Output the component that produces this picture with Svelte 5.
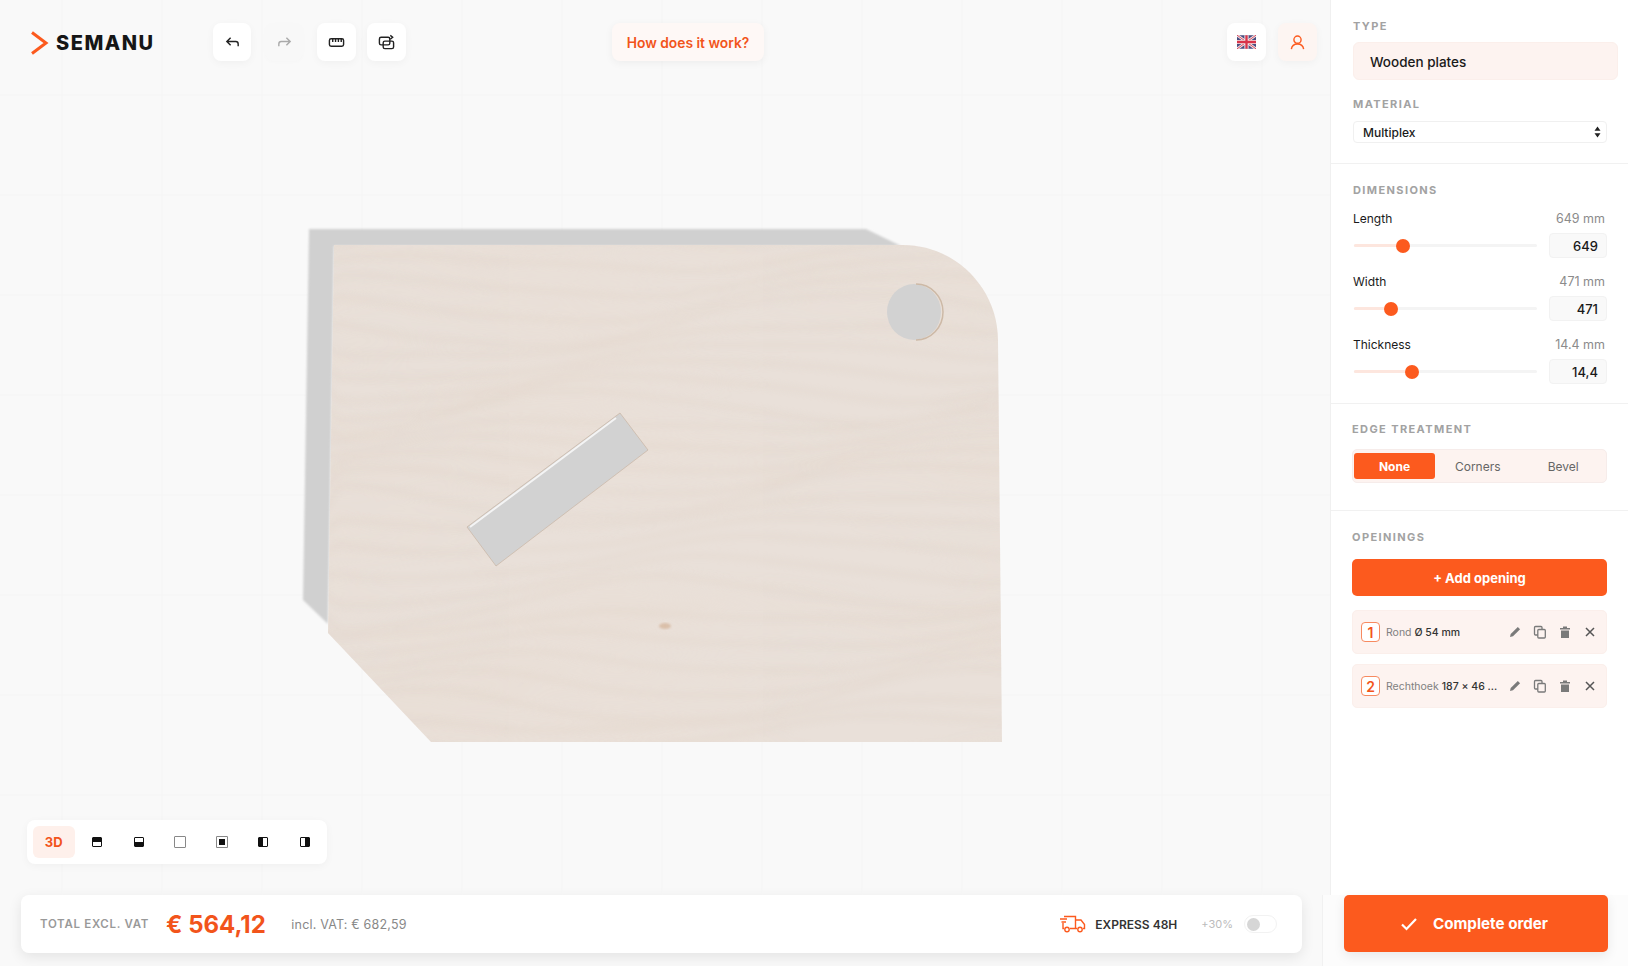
<script lang="ts">
	const dims = [
		{ name: 'Length', read: '649 mm', value: '649', pos: 49 },
		{ name: 'Width', read: '471 mm', value: '471', pos: 37 },
		{ name: 'Thickness', read: '14.4 mm', value: '14,4', pos: 58 }
	];
	const edges = ['None', 'Corners', 'Bevel'];
	const openings = [
		{ nr: 1, kind: 'Rond', size: 'Ø 54 mm' },
		{ nr: 2, kind: 'Rechthoek', size: '187 × 46 ...' }
	];
	const gridX = Array.from({ length: 13 }, (_, i) => 62 + i * 100);
	const gridY = Array.from({ length: 8 }, (_, i) => 95 + i * 100);

	// wavy grain lines for the plywood
	function grainLine(i: number) {
		const y = 250 + i * 19;
		let d = `M320 ${y}`;
		for (let x = 340; x <= 1020; x += 20) {
			const wob = Math.sin(x / 95 + i * 0.55) * (9 + (i % 5) * 3) + Math.sin(x / 37 + i) * 2;
			const lift = -((x - 320) / 680) * 26 + Math.sin(i / 3) * 8;
			d += ` L${x} ${(y + wob + lift).toFixed(1)}`;
		}
		return d;
	}
	const grain = Array.from({ length: 27 }, (_, i) => grainLine(i));
</script>

<div class="app">
	<div class="top">
		<main class="canvas">
			<svg class="scene" viewBox="0 0 1330 895" aria-hidden="true">
				<defs>
					<clipPath id="board">
						<path d="M334 245H903C955 245 998 288 998 340L1002 742H431L328 633Z" />
					</clipPath>
					<filter id="grain" x="0" y="0" width="100%" height="100%">
						<feTurbulence type="fractalNoise" baseFrequency="0.003 0.012" numOctaves="3" seed="11" />
						<feColorMatrix values="0 0 0 0 0.82  0 0 0 0 0.71  0 0 0 0 0.62  0.9 0 0 0 -0.3" />
					</filter>
					<filter id="soft"><feGaussianBlur stdDeviation="1" /></filter>
					<filter id="softer"><feGaussianBlur stdDeviation="3" /></filter>
				</defs>
				{#each gridX as x}
					<line x1={x} y1="0" x2={x} y2="895" class="gridline" />
				{/each}
				{#each gridY as y}
					<line x1="0" y1={y} x2="1330" y2={y} class="gridline" />
				{/each}
				<path d="M309 229H866L901 246H334L328 624L303 600Z" fill="#d0d0d0" filter="url(#soft)" />
				<g clip-path="url(#board)">
					<rect x="320" y="240" width="690" height="510" fill="#e9e0d9" />
					<rect x="320" y="240" width="690" height="510" filter="url(#grain)" opacity="0.5" />
					<g filter="url(#softer)" fill="none" stroke="#dccbbd" stroke-width="5" opacity="0.2">
						{#each grain as d}
							<path {d} />
						{/each}
					</g>
					<ellipse cx="665" cy="626" rx="6" ry="3" fill="#d6b79e" opacity="0.8" filter="url(#soft)" />
				</g>
				<ellipse cx="914" cy="312" rx="27" ry="28" fill="#d2d2d2" />
				<path d="M916 284A27 28 0 0 1 916 340" fill="none" stroke="#cdb9a6" stroke-width="1.500" />
				<path d="M620 413L648 450L496 566L467 527Z" fill="#d2d2d2" stroke="#c8b5a3" stroke-width="0.700" />
				<path d="M470 527L616 418" stroke="#f4f4f4" stroke-width="2" />
			</svg>

			<header class="bar">
				<div class="logo">
					<svg width="19" height="24" viewBox="0 0 19 24"><path d="M2 1.500L16 12L2 22.500" fill="none" stroke="#fc5a1e" stroke-width="3" /></svg>
					<span>SEMANU</span>
				</div>
				<div class="tools">
					<button class="tile" aria-label="Undo">
						<svg viewBox="0 0 18 18"><path d="M7 4L3 8L7 12M3 8H12.500A2.500 2.500 0 0 1 15 10.500V13" /></svg>
					</button>
					<button class="tile off" aria-label="Redo">
						<svg viewBox="0 0 18 18"><path d="M11 4L15 8L11 12M15 8H5.500A2.500 2.500 0 0 0 3 10.500V13" /></svg>
					</button>
					<button class="tile wide" aria-label="Measure">
						<svg viewBox="0 0 18 18"><rect x="1.500" y="5" width="15" height="8" rx="1.800" /><path d="M5 5V8.500M8 5V8.500M11 5V8.500M14 5V8.500" /></svg>
					</button>
					<button class="tile wide" aria-label="Swap">
						<svg viewBox="0 0 18 18"><rect x="1.500" y="3.500" width="11" height="8" rx="1.800" /><rect x="5.500" y="7.500" width="11" height="8" rx="1.800" /><path d="M13 1.500L15.500 3.500L13 5.500" /></svg>
					</button>
				</div>
				<button class="how">How does it work?</button>
				<div class="account">
					<button class="tile wide" aria-label="Language">
						<svg class="flag" viewBox="0 0 18 13">
							<rect width="18" height="13" rx="1" fill="#4a4d80" />
							<path d="M0 0L18 13M18 0L0 13" stroke="#f1e6e8" stroke-width="2.600" />
							<path d="M0 0L18 13M18 0L0 13" stroke="#d8344a" stroke-width="0.800" />
							<path d="M9 0V13M0 6.500H18" stroke="#f1e6e8" stroke-width="4" />
							<path d="M9 0V13M0 6.500H18" stroke="#d8344a" stroke-width="2.200" />
						</svg>
					</button>
					<button class="tile wide tint" aria-label="Account">
						<svg viewBox="0 0 18 18"><circle cx="9" cy="6" r="3.800" /><path d="M2.500 16C3 12.500 5.500 10.500 9 10.500S15 12.500 15.500 16" /></svg>
					</button>
				</div>
			</header>

			<div class="views">
				<button class="view active">3D</button>
				<button class="view" aria-label="Top"><span class="cube top-half"></span></button>
				<button class="view" aria-label="Bottom"><span class="cube bottom-half"></span></button>
				<button class="view" aria-label="Front"><span class="cube plain"></span></button>
				<button class="view" aria-label="Back"><span class="cube inner"></span></button>
				<button class="view" aria-label="Left"><span class="cube left-half"></span></button>
				<button class="view" aria-label="Right"><span class="cube right-half"></span></button>
			</div>
		</main>

		<aside class="side">
			<section class="first">
				<h3>TYPE</h3>
				<div class="type">Wooden plates</div>
				<h3 class="second">MATERIAL</h3>
				<div class="select">
					<span>Multiplex</span>
					<svg width="7" height="12" viewBox="0 0 7 12"><path d="M3.500 0.500L6.500 4.800H0.500ZM3.500 11.500L0.500 7.200H6.500Z" fill="#222" /></svg>
				</div>
			</section>

			<section class="dims">
				<h3>DIMENSIONS</h3>
				{#each dims as d}
					<div class="dim">
						<div class="dim-head"><span>{d.name}</span><span class="read">{d.read}</span></div>
						<div class="dim-ctl">
							<div class="track">
								<div class="fill" style="width:{d.pos}px"></div>
								<div class="thumb" style="left:{d.pos}px"></div>
							</div>
							<div class="num">{d.value}</div>
						</div>
					</div>
				{/each}
			</section>

			<section class="edge">
				<h3>EDGE TREATMENT</h3>
				<div class="seg">
					{#each edges as e, i}
						<button class:on={i === 0}>{e}</button>
					{/each}
				</div>
			</section>

			<section class="open">
				<h3>OPEININGS</h3>
				<button class="add">+ Add opening</button>
				{#each openings as o}
					<div class="item">
						<span class="badge">{o.nr}</span>
						<span class="desc">{o.kind} <b>{o.size}</b></span>
						<div class="acts">
							<svg viewBox="0 0 14 14"><path d="M2 12L2.700 9L9.800 1.900L12.100 4.200L5 11.300Z" fill="#7a7a7a" /></svg>
							<svg viewBox="0 0 14 14" class="line"><rect x="1.500" y="1.500" width="7.500" height="8.500" rx="1" /><rect x="4.800" y="4.500" width="7.500" height="8.500" rx="1" fill="#fdf3f0" /></svg>
							<svg viewBox="0 0 14 14"><path d="M2 3H5V1.500H9V3H12V4.500H2ZM3 5.500H11V13H3Z" fill="#7a7a7a" /></svg>
							<svg viewBox="0 0 14 14" class="line x"><path d="M3 3L11 11M11 3L3 11" /></svg>
						</div>
					</div>
				{/each}
			</section>
		</aside>
	</div>

	<footer class="foot">
		<div class="totals">
			<span class="tl">TOTAL EXCL. VAT</span>
			<span class="price">€ 564,12</span>
			<span class="incl">incl. VAT: € 682,59</span>
			<svg class="truck" width="27" height="18" viewBox="0 0 27 18">
				<path d="M5 1.500H16.500V13.500H11M5 13.500H4V8M16.500 5H22L25.500 9.500V13.500H24M18 13.500H16.500M1 4H8M2.500 7H7" fill="none" stroke="#fc5a1e" stroke-width="1.400" />
				<circle cx="8" cy="14.500" r="2.200" fill="none" stroke="#fc5a1e" stroke-width="1.400" />
				<circle cx="21" cy="14.500" r="2.200" fill="none" stroke="#fc5a1e" stroke-width="1.400" />
			</svg>
			<span class="express">EXPRESS 48H</span>
			<span class="plus">+30%</span>
			<span class="toggle"><i></i></span>
		</div>
		<div class="order">
			<button class="complete">
				<svg width="18" height="14" viewBox="0 0 18 14"><path d="M2 7.500L6.500 12L16 2" fill="none" stroke="#fff" stroke-width="2.200" /></svg>
				Complete order
			</button>
		</div>
	</footer>
</div>

<style>
	:global(body) {
		background: #f9f9f9;
		font-family: Inter, "Liberation Sans", sans-serif;
		color: #1a1a1a;
	}

	button {
		font-family: inherit;
		border: none;
		cursor: pointer;
	}

	.app {
		width: 1628px;
		height: 966px;
		display: flex;
		flex-direction: column;
		overflow: hidden;
	}

	.top {
		display: flex;
		height: 895px;
	}

	.canvas {
		position: relative;
		width: 1330px;
		display: flex;
		flex-direction: column;
		justify-content: space-between;
		padding-bottom: 31px;
		box-sizing: border-box;
	}

	.scene {
		position: absolute;
		inset: 0;
		width: 1330px;
		height: 895px;
	}

	.gridline {
		stroke: #f5f5f5;
		stroke-width: 1;
	}

	.bar {
		position: relative;
		display: flex;
		align-items: flex-start;
		padding: 23px 13px 0 30px;
	}

	.logo {
		width: 183px;
		height: 40px;
		display: flex;
		align-items: center;
		gap: 7px;
		font-size: 20px;
		font-weight: 800;
		letter-spacing: 1.500px;
		color: #161616;
	}

	.tools {
		display: grid;
		grid-template-columns: 52px 52px 50px 39px;
	}

	.tile {
		width: 38px;
		height: 38px;
		padding: 0;
		display: flex;
		align-items: center;
		justify-content: center;
		background: #fff;
		border-radius: 8px;
		box-shadow: 0 2px 8px rgba(0, 0, 0, 0.04);
	}

	.tile svg {
		width: 17px;
		height: 17px;
		fill: none;
		stroke: #222;
		stroke-width: 1.500;
	}

	.tile.wide {
		width: 39px;
	}

	.tile.off {
		background: #f8f8f8;
		box-shadow: 0 1px 4px rgba(0, 0, 0, 0.015);
	}

	.tile.off svg {
		stroke: #aaa;
	}

	.tile.tint {
		background: #fdf5f2;
	}

	.tile.tint svg {
		stroke: #fc5a1e;
	}

	.tile svg.flag {
		width: 19px;
		height: 14px;
		stroke: none;
	}

	.how {
		margin-left: 206px;
		width: 152px;
		height: 38px;
		padding: 1px 0 0;
		background: #fef8f6;
		color: #f2541b;
		font-size: 13.800px;
		font-weight: 600;
		border-radius: 8px;
		box-shadow: 0 2px 8px rgba(0, 0, 0, 0.05);
	}

	.account {
		margin-left: auto;
		display: flex;
		gap: 12px;
	}

	.views {
		position: relative;
		align-self: flex-start;
		margin-left: 27px;
		display: flex;
		align-items: center;
		padding-left: 6px;
		width: 300px;
		height: 44px;
		box-sizing: border-box;
		background: #fff;
		border-radius: 8px;
		box-shadow: 0 2px 8px rgba(0, 0, 0, 0.04);
	}

	.view {
		flex: none;
		width: 41.500px;
		height: 32px;
		padding: 0;
		background: transparent;
		display: flex;
		align-items: center;
		justify-content: center;
		font-size: 13px;
		font-weight: 700;
		color: #f2541b;
		border-radius: 6px;
	}

	.view.active {
		background: #fef0eb;
		margin-right: 2px;
	}

	.cube {
		display: block;
		width: 8px;
		height: 8px;
		border: 1px solid #111;
		border-radius: 1px;
	}

	.top-half {
		background: linear-gradient(#111 50%, #fff 50%);
	}

	.bottom-half {
		background: linear-gradient(#fff 50%, #111 50%);
	}

	.left-half {
		background: linear-gradient(90deg, #111 50%, #fff 50%);
	}

	.right-half {
		background: linear-gradient(90deg, #fff 50%, #111 50%);
	}

	.plain {
		width: 10px;
		height: 10px;
		border-color: #888;
	}

	.inner {
		width: 10px;
		height: 10px;
		border-color: #888;
		background: #111;
		box-shadow: inset 0 0 0 2px #fff;
	}

	.side {
		width: 298px;
		box-sizing: border-box;
		background: #fff;
		border-left: 1px solid #f0f0f0;
	}

	section {
		padding: 20px 21px 20px 22px;
		border-bottom: 1px solid #f1f1f1;
	}

	h3 {
		margin: 0;
		font-size: 11px;
		line-height: 12px;
		font-weight: 700;
		letter-spacing: 1.400px;
		color: #a2a2a2;
	}

	.second {
		margin-top: 18px;
	}

	.first {
		height: 164px;
		box-sizing: border-box;
	}

	.type {
		margin: 10px -11px 0 0;
		height: 38px;
		padding: 1px 0 0 16px;
		display: flex;
		align-items: center;
		background: #fdf3f0;
		border: 1px solid #fbefeb;
		box-sizing: border-box;
		border-radius: 6px;
		font-size: 13.500px;
		font-weight: 500;
	}

	.select {
		margin-top: 11px;
		height: 22px;
		padding: 0 5px 0 9px;
		display: flex;
		align-items: center;
		justify-content: space-between;
		box-sizing: border-box;
		border: 1px solid #f0f0f0;
		border-radius: 4px;
		font-size: 12px;
		font-weight: 500;
	}

	.dims {
		padding-bottom: 19px;
	}

	.dim {
		margin-top: 17px;
	}

	.dim:first-of-type {
		margin-top: 16px;
	}

	.dim-head {
		display: flex;
		justify-content: space-between;
		font-size: 12px;
		line-height: 14px;
		padding-right: 2px;
	}

	.read {
		font-size: 12.500px;
		color: #8b8b8b;
	}

	.dim-ctl {
		margin-top: 7px;
		display: flex;
		align-items: center;
		justify-content: space-between;
		padding-left: 1px;
	}

	.track {
		position: relative;
		width: 183px;
		height: 3px;
		background: #f4f4f4;
		border-radius: 2px;
	}

	.fill {
		height: 3px;
		background: #fde6de;
		border-radius: 2px;
	}

	.thumb {
		position: absolute;
		top: -5.500px;
		width: 14px;
		height: 14px;
		margin-left: -7px;
		border-radius: 50%;
		background: #fc5a1e;
	}

	.num {
		width: 58px;
		height: 25px;
		padding-right: 8px;
		box-sizing: border-box;
		text-align: right;
		font-size: 13px;
		font-weight: 500;
		line-height: 25px;
		background: #f9f9f9;
		border: 1px solid #f2f2f2;
		border-radius: 4px;
	}

	.edge {
		padding: 19px 21px 27px 21px;
	}

	.seg {
		margin-top: 14px;
		height: 34px;
		padding: 3px 0 3px 1px;
		display: flex;
		box-sizing: border-box;
		background: #fdf3f0;
		border: 1px solid #f6ecea;
		border-radius: 5px;
	}

	.seg button {
		flex: 1;
		background: transparent;
		font-size: 12px;
		color: #666;
		border-radius: 3px;
	}

	.seg button.on {
		flex: none;
		width: 81px;
		background: #fc5a1e;
		color: #fff;
		font-weight: 700;
	}

	.open {
		padding: 20px 21px 0 21px;
		border-bottom: none;
	}

	.add {
		margin-top: 16px;
		width: 100%;
		height: 37px;
		background: #fc5a1e;
		color: #fff;
		font-size: 13px;
		font-weight: 700;
		border-radius: 5px;
	}

	.item {
		margin-top: 10px;
		height: 44px;
		padding: 0 9px 0 8px;
		display: flex;
		align-items: center;
		background: #fdf3f0;
		border: 1px solid #fbefeb;
		box-sizing: border-box;
		border-radius: 5px;
	}

	.add + .item {
		margin-top: 14px;
	}

	.badge {
		flex: none;
		width: 19px;
		height: 20px;
		box-sizing: border-box;
		display: flex;
		align-items: center;
		justify-content: center;
		background: #fff;
		border: 1px solid #f78a60;
		border-radius: 4px;
		font-size: 14px;
		font-weight: 600;
		color: #f2541b;
	}

	.desc {
		margin-left: 6px;
		flex: none;
		font-size: 10.500px;
		color: #808080;
		white-space: nowrap;
	}

	.desc b {
		font-weight: 500;
		color: #333;
	}

	.acts {
		margin-left: auto;
		display: flex;
		gap: 11px;
	}

	.acts svg {
		width: 14px;
		height: 14px;
		display: block;
	}

	.acts .line {
		fill: none;
		stroke: #7a7a7a;
		stroke-width: 1.300;
	}

	.acts .x {
		stroke: #555;
		stroke-width: 1.500;
	}

	.foot {
		flex: 1;
		display: flex;
		align-items: flex-start;
	}

	.totals {
		margin-left: 21px;
		width: 1281px;
		height: 58px;
		padding: 0 25px 0 19px;
		display: flex;
		align-items: center;
		box-sizing: border-box;
		background: #fff;
		border-radius: 8px;
		box-shadow: 0 4px 14px rgba(0, 0, 0, 0.09);
	}

	.tl {
		font-size: 11.500px;
		font-weight: 600;
		letter-spacing: 0.700px;
		color: #999;
	}

	.price {
		margin-left: 17px;
		font-size: 24px;
		font-weight: 700;
		color: #f2541b;
	}

	.incl {
		margin-left: 25.500px;
		font-size: 12.500px;
		letter-spacing: 0.200px;
		color: #888;
	}

	.truck {
		margin-left: auto;
	}

	.express {
		margin-left: 9px;
		font-size: 12px;
		font-weight: 600;
		color: #333;
	}

	.plus {
		margin-left: 24px;
		font-size: 11px;
		color: #bbb;
	}

	.toggle {
		margin-left: 11px;
		width: 33px;
		height: 18px;
		padding: 2px;
		box-sizing: border-box;
		background: #fff;
		border: 1px solid #f2f2f2;
		border-radius: 9px;
	}

	.toggle i {
		display: block;
		width: 13px;
		height: 13px;
		border-radius: 50%;
		background: #d6d6d6;
	}

	.order {
		margin-left: 20px;
		flex: 1;
		height: 100%;
		padding-left: 21px;
		box-sizing: border-box;
		border-left: 1px solid #f1f1f1;
		background: #fcfcfc;
	}

	.complete {
		width: 264px;
		height: 57px;
		padding: 0 4px 0 0;
		display: flex;
		align-items: center;
		justify-content: center;
		gap: 15px;
		background: #fc5a1e;
		color: #fff;
		font-size: 15.200px;
		font-weight: 700;
		border-radius: 5px;
		box-shadow: 0 4px 12px rgba(0, 0, 0, 0.08);
	}
</style>
